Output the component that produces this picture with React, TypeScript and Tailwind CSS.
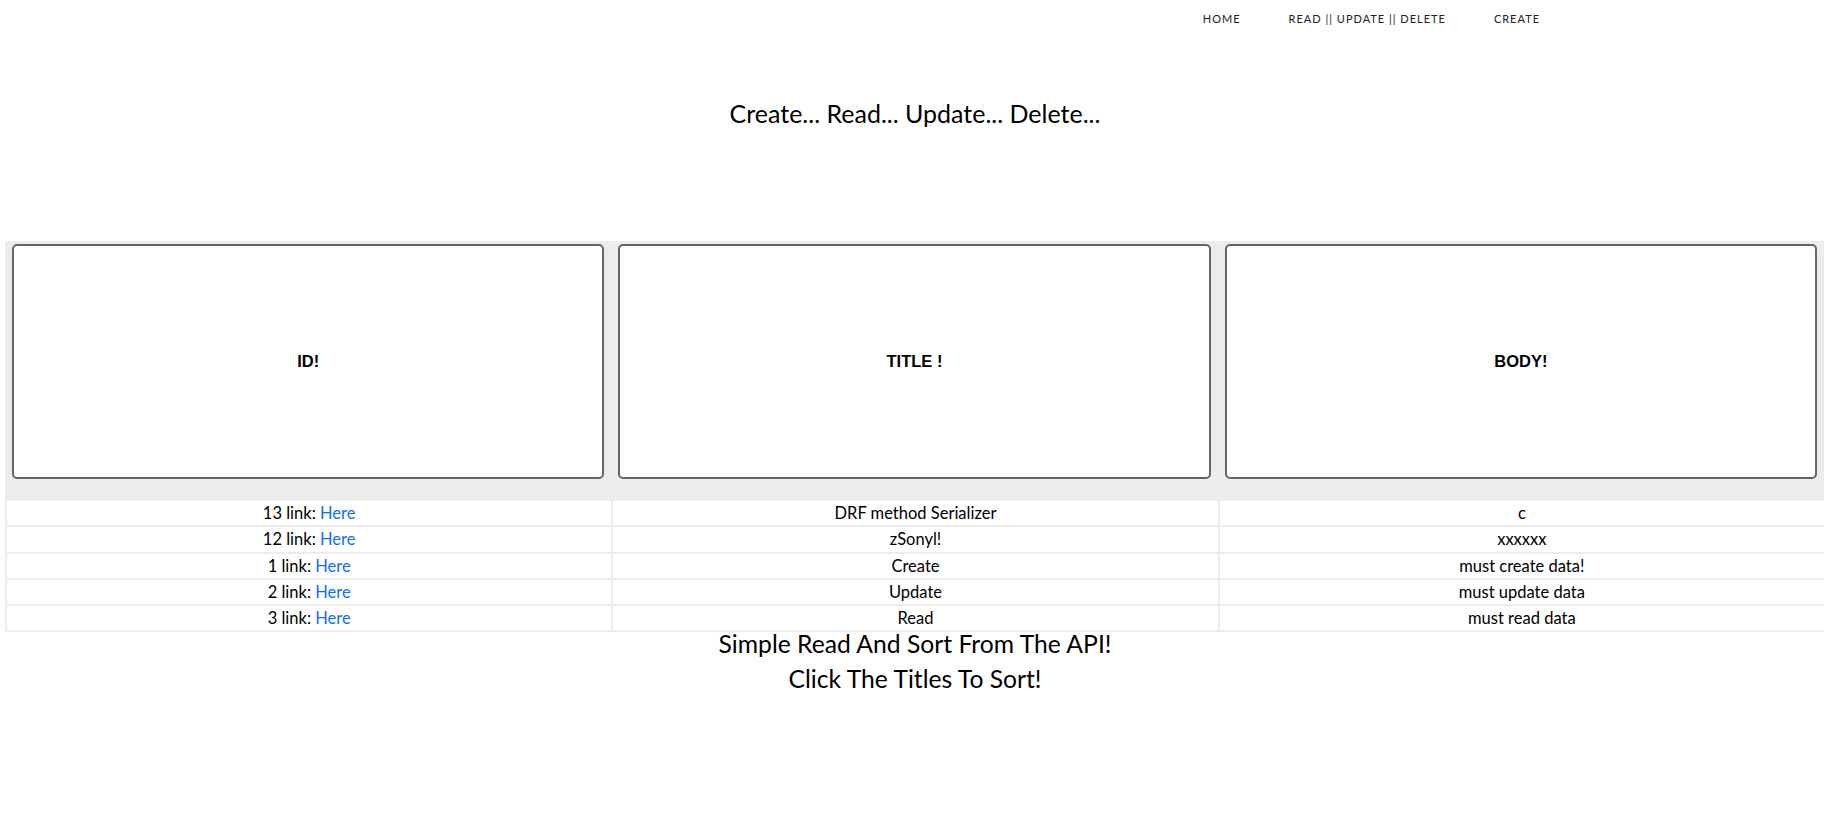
import { useState } from 'react';

type Post = { id: number; title: string; body: string };

const POSTS: Post[] = [
  { id: 13, title: 'DRF method Serializer', body: 'c' },
  { id: 12, title: 'zSonyl!', body: 'xxxxxx' },
  { id: 1, title: 'Create', body: 'must create data!' },
  { id: 2, title: 'Update', body: 'must update data' },
  { id: 3, title: 'Read', body: 'must read data' },
];

const NAV = ['Home', 'Read || Update || Delete', 'Create'];

export default function App() {
  const [posts] = useState<Post[]>(POSTS);

  return (
    <div className="min-h-[838px] bg-white text-black font-['Lato','Liberation_Sans',sans-serif]">
      {/* nav */}
      <nav className="flex justify-end pr-[284px] h-[36px] pt-[2px] items-center gap-12">
        {NAV.map((n) => (
          <a key={n} href="#" className="text-[11px] uppercase tracking-[1px] text-[#222]">
            {n}
          </a>
        ))}
      </nav>

      <h1 className="text-center text-[25px] leading-[30px] mt-[62px] ml-[6px]">
        Create... Read... Update... Delete...
      </h1>

      {/* table */}
      <table className="ml-[5px] mt-[113px] w-[1821px] border-separate border-spacing-[2px] bg-[#ececec] table-fixed">
        <thead>
          <tr>
            {['ID!', 'TITLE !', 'BODY!'].map((h) => (
              <th key={h} className="pt-[1px] pb-[20px] pl-[5px] pr-[7px]">
                <button className="w-full h-[235px] bg-white border-2 border-[#666] rounded-[5px] text-[16.5px] font-bold font-['Liberation_Sans',Arial,sans-serif]">
                  {h}
                </button>
              </th>
            ))}
          </tr>
        </thead>
        <tbody>
          {posts.map((p) => (
            <tr key={p.id}>
              <td className="bg-white text-center text-[16.5px] h-[24.3px] leading-[24px] p-0">
                {p.id} link: <a href="#" className="text-[#0d6efd]">Here</a>
              </td>
              <td className="bg-white text-center text-[16.5px] h-[24.3px] leading-[24px] p-0">{p.title}</td>
              <td className="bg-white text-center text-[16.5px] h-[24.3px] leading-[24px] p-0">{p.body}</td>
            </tr>
          ))}
        </tbody>
      </table>

      <div className="text-center text-[24.7px] leading-[35px] mt-[-6px] ml-[6px]">
        <p>Simple Read And Sort From The API!</p>
        <p>Click The Titles To Sort!</p>
      </div>
    </div>
  );
}
